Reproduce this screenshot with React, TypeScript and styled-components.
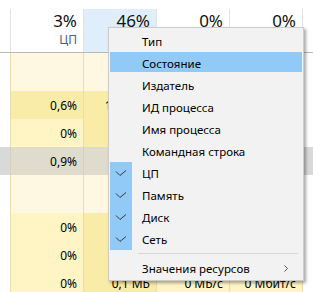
import React from "react";
import styled, { createGlobalStyle } from "styled-components";

const Global = createGlobalStyle`
  html, body { margin: 0; padding: 0; background: #fff; }
  body { font-family: "Noto Sans", "Open Sans", sans-serif; }
`;

const Screen = styled.div`
  position: relative;
  width: 313px;
  height: 292px;
  overflow: hidden;
  background: #fff;
`;

const Table = styled.div`
  display: flex;
  flex-direction: column;
`;

const HeaderRow = styled.div`
  display: grid;
  grid-template-columns: 10px repeat(4, 73px) 1fr;
  height: 52px;
  border-bottom: 1px solid #b9b9b9;
`;

const HeadCell = styled.div<{ $active?: boolean }>`
  margin-top: 9px;
  border-left: 1px solid #e3e3e3;
  background: ${(p) => (p.$active ? "#e0eefc" : "transparent")};
  display: flex;
  flex-direction: column;
  align-items: flex-end;
  padding: 1px 6px 0 0;
`;

const Percent = styled.div`
  font-size: 17px;
  line-height: 22px;
  color: #111;
`;

const Label = styled.div`
  font-size: 12px;
  line-height: 16px;
  color: #4c607a;
`;

const Row = styled.div<{ $h: number }>`
  display: grid;
  grid-template-columns: 10px repeat(4, 73px) 1fr;
  height: ${(p) => p.$h}px;
`;

const Margin = styled.div<{ $bg: string }>`
  background: ${(p) => p.$bg};
`;

const Cell = styled.div<{ $bg: string; $line: string }>`
  background: ${(p) => p.$bg};
  border-left: 1px solid ${(p) => p.$line};
  display: flex;
  align-items: center;
  justify-content: flex-end;
  padding-right: 6px;
  font-size: 12px;
  color: #000;
  white-space: nowrap;
`;

const Fill = styled.div<{ $bg: string; $line: string }>`
  background: ${(p) => p.$bg};
  border-left: 1px solid ${(p) => p.$line};
`;

const Menu = styled.div`
  position: absolute;
  left: 108px;
  top: 27px;
  width: 196px;
  box-sizing: border-box;
  background: #f2f2f2;
  border: 1px solid #cccccc;
  padding: 2px 1px 1px;
  box-shadow: 2px 2px 3px rgba(0, 0, 0, 0.35);
  display: flex;
  flex-direction: column;
`;

const Item = styled.div<{ $hover?: boolean }>`
  position: relative;
  height: 22px;
  display: grid;
  grid-template-columns: 22px 1fr 32px;
  align-items: center;
  font-size: 11.5px;
  color: #000;
  &::before {
    content: "";
    position: absolute;
    left: 0;
    right: 0;
    top: 0;
    bottom: 2px;
    background: ${(p) => (p.$hover ? "#91c9f7" : "transparent")};
  }
`;

const Gutter = styled.div<{ $checked?: boolean }>`
  position: relative;
  height: 22px;
  background: ${(p) => (p.$checked ? "#91c9f7" : "transparent")};
  display: flex;
  align-items: center;
  justify-content: center;
`;

const Text = styled.span`
  position: relative;
  padding-left: 10px;
  white-space: nowrap;
`;

const Arrow = styled.div`
  position: relative;
  display: flex;
  align-items: center;
  justify-content: center;
`;

const Separator = styled.div`
  height: 7px;
  display: flex;
  align-items: center;
  padding: 0 4px 0 28px;
  &::after {
    content: "";
    flex: 1;
    height: 1px;
    background: #d7d7d7;
  }
`;

const Check = () => (
  <svg width="12" height="7" viewBox="0 0 12 7">
    <polyline points="1,1.5 5,5.5 11,0.5" fill="none" stroke="#3a3a3a" strokeWidth="1" />
  </svg>
);

const Chevron = () => (
  <svg width="6" height="9" viewBox="0 0 6 9">
    <polyline points="1.5,1.5 4.5,4.5 1.5,7.5" fill="none" stroke="#555" strokeWidth="1" />
  </svg>
);

const LIGHT = "#fef7e1";
const L1 = "#fff4c4";
const L2 = "#f9eca8";
const SEL = "#dfdccd";
const LINE = "#ebdcab";

type R = { h: number; margin: string; bg: string[]; text: string[]; line?: string };

const rows: R[] = [
  { h: 38, margin: "#fff", bg: [LIGHT, LIGHT, LIGHT, LIGHT], text: ["", "", "", ""] },
  { h: 28, margin: "#fff", bg: [L2, L2, L1, L1], text: ["0,6%", "17,5 МБ", "", ""] },
  { h: 28, margin: "#fff", bg: [L1, L2, L1, L1], text: ["0%", "", "", ""] },
  { h: 28, margin: "#d9d9d9", bg: [SEL, SEL, SEL, SEL], text: ["0,9%", "", "", ""], line: "#d6d1bc" },
  { h: 38, margin: "#fff", bg: [LIGHT, LIGHT, LIGHT, LIGHT], text: ["", "", "", ""] },
  { h: 28, margin: "#fff", bg: [L1, L2, L1, L1], text: ["0%", "", "", ""] },
  { h: 28, margin: "#fff", bg: [L1, L2, L1, L1], text: ["0%", "", "", ""] },
  { h: 28, margin: "#fff", bg: [L1, L2, L1, L1], text: ["0%", "0,1 МБ", "0 МБ/с", "0 Мбит/с"] },
];

const headers = [
  { pct: "3%", label: "ЦП" },
  { pct: "46%", label: "", active: true },
  { pct: "0%", label: "" },
  { pct: "0%", label: "" },
];

const items: { label: string; checked?: boolean; hover?: boolean }[] = [
  { label: "Тип" },
  { label: "Состояние", hover: true },
  { label: "Издатель" },
  { label: "ИД процесса" },
  { label: "Имя процесса" },
  { label: "Командная строка" },
  { label: "ЦП", checked: true },
  { label: "Память", checked: true },
  { label: "Диск", checked: true },
  { label: "Сеть", checked: true },
];

export default function App() {
  return (
    <Screen>
      <Global />
      <Table>
        <HeaderRow>
          <div />
          {headers.map((h, i) => (
            <HeadCell key={i} $active={h.active}>
              <Percent>{h.pct}</Percent>
              {h.label && <Label>{h.label}</Label>}
            </HeadCell>
          ))}
          <HeadCell />
        </HeaderRow>
        {rows.map((r, i) => (
          <Row key={i} $h={r.h}>
            <Margin $bg={r.margin} />
            {r.bg.map((bg, j) => (
              <Cell key={j} $bg={bg} $line={r.line ?? LINE}>
                {r.text[j]}
              </Cell>
            ))}
            <Fill $bg={r.margin === "#fff" ? "#fff" : r.margin} $line={r.line ?? LINE} />
          </Row>
        ))}
      </Table>
      <Menu>
        {items.map((it, i) => (
          <Item key={i} $hover={it.hover}>
            <Gutter $checked={it.checked}>{it.checked && <Check />}</Gutter>
            <Text>{it.label}</Text>
            <span />
          </Item>
        ))}
        <Separator />
        <Item>
          <Gutter />
          <Text>Значения ресурсов</Text>
          <Arrow>
            <Chevron />
          </Arrow>
        </Item>
      </Menu>
    </Screen>
  );
}
